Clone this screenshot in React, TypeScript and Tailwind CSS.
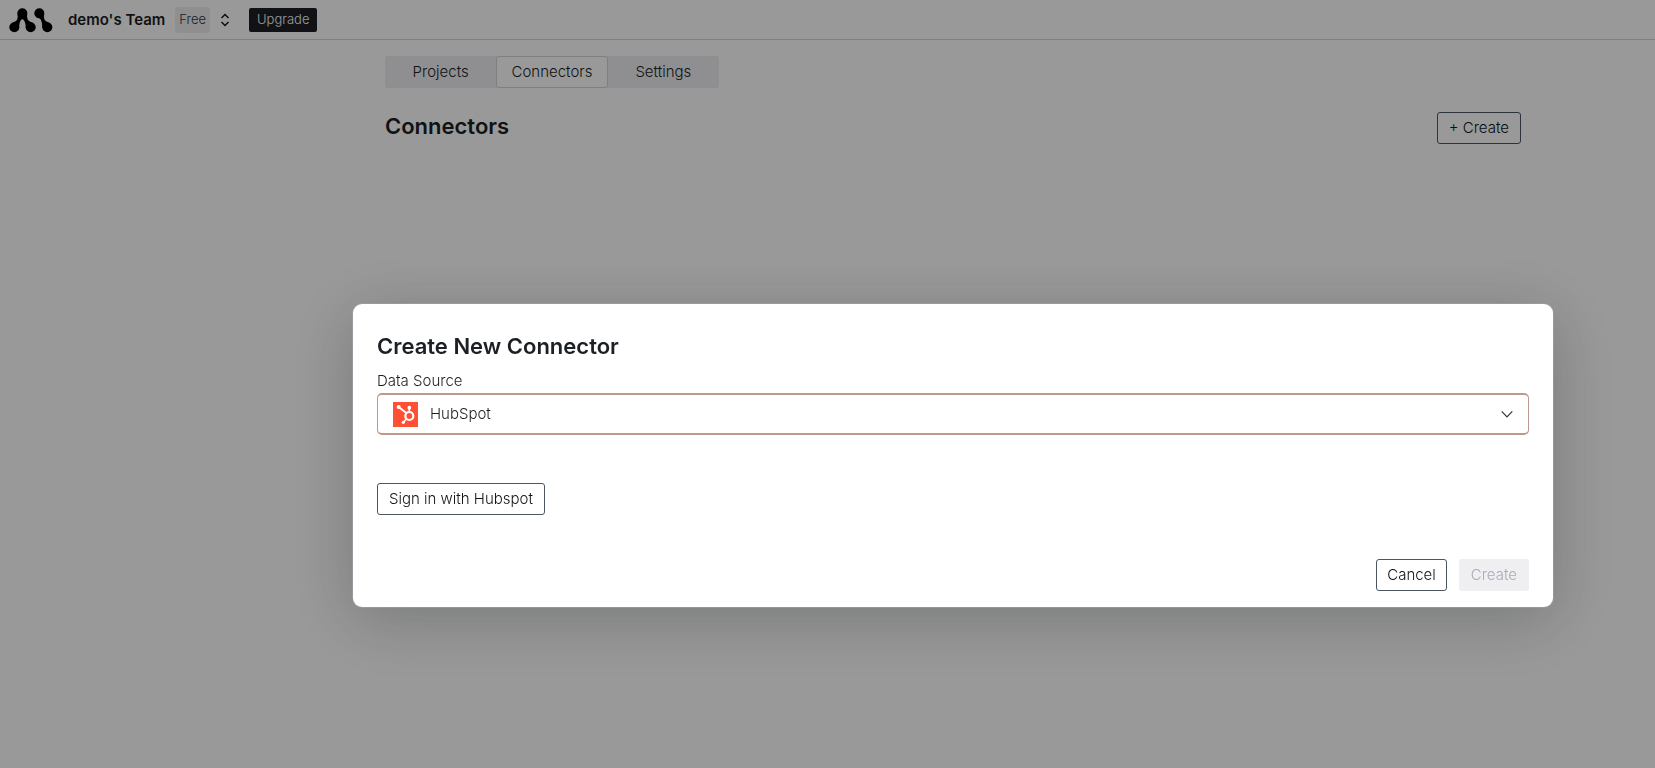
import { useState } from "react";

const buttonBase =
  "h-8 rounded-[3px] border text-[15px] leading-5 whitespace-nowrap";
const outlineButton = `${buttonBase} border-[#4b5563] px-[11px] text-[#111417]`;

function Logo() {
  return (
    <svg viewBox="26 23 132 75" className="h-[25px] w-11" aria-label="Home" role="img">
      <circle cx="66" cy="39" r="15" />
      <circle cx="42" cy="81" r="15" />
      <circle cx="91" cy="81" r="15" />
      <circle cx="117" cy="39" r="15" />
      <circle cx="141" cy="81" r="15" />
      <path d="M51.500 43Q56 60 38 66.500L56 82Q57 60 66 56Q75 60 77 82L95 66.500Q77 60 80.500 43Z" />
      <path d="M107 50Q110 53 117 54Q125 58 126 82L145 66.500Q127 60 131.500 43Z" />
    </svg>
  );
}

function HubSpotLogo() {
  return (
    <svg viewBox="0 0 75 75" className="pointer-events-none absolute left-4 size-[25px]" aria-hidden="true">
      <rect width="75" height="75" fill="#ff5035" />
      <g stroke="#fff" fill="none">
        <circle cx="49" cy="42" r="12" strokeWidth="6.5" />
        <path d="M49 30V18" strokeWidth="5" />
        <path d="M40 33L18 16" strokeWidth="5.5" />
        <path d="M40 51L32 60" strokeWidth="4.5" />
      </g>
      <g fill="#fff">
        <circle cx="49" cy="17" r="5.5" />
        <circle cx="17" cy="15" r="6" />
        <circle cx="31" cy="61" r="5" />
      </g>
    </svg>
  );
}

function Header() {
  return (
    <header className="flex h-10 items-center border-b border-[#d4d4d8] pt-px pl-[9px]">
      <a href="#home">
        <Logo />
      </a>
      <span className="ml-[15px] text-[15px] font-semibold text-[#1a1d21]">demo's Team</span>
      <span className="ml-[10px] flex h-[26px] items-center rounded bg-[#eeeef1] px-1 text-[13px] text-[#33363b]">
        Free
      </span>
      <button type="button" aria-label="Switch team" className="ml-[7px] flex size-4 items-center justify-center">
        <svg viewBox="0 0 16 16" className="size-4" fill="none" stroke="#18181b" strokeWidth="1.5">
          <path d="M4.500 6L8 2.500L11.500 6M4.500 10L8 13.500L11.500 10" />
        </svg>
      </button>
      <button type="button" className="ml-4 h-6 rounded-[2px] bg-[#1c1f23] px-2 text-[13px] text-white">
        Upgrade
      </button>
    </header>
  );
}

function Tabs() {
  const tab = "h-8 rounded-[3px] text-[15px] text-[#1c1f23]";
  return (
    <nav className="grid w-[334px] grid-cols-3 rounded-[3px] bg-[#eeeff3]">
      <button type="button" className={tab}>Projects</button>
      <button type="button" aria-current="page" className={`${tab} border border-[#d4d4d8] bg-white`}>
        Connectors
      </button>
      <button type="button" className={tab}>Settings</button>
    </nav>
  );
}

function ConnectorDialog() {
  const [source, setSource] = useState("HubSpot");
  return (
    <div className="fixed inset-0 flex items-start justify-center bg-black/40 pt-76 pl-[251px]">
      <div
        role="dialog"
        aria-modal="true"
        aria-labelledby="dialog-title"
        className="w-full max-w-[1200px] rounded-[9px] bg-white px-6 pt-6 pb-4 shadow-[0_0_0_1px_rgba(160,160,170,0.6),0_12px_64px_rgba(20,22,28,0.25)]"
      >
        <h2 id="dialog-title" className="text-[22px] leading-9 font-semibold text-[#1c1f23]">
          Create New Connector
        </h2>
        <label htmlFor="source" className="mt-[5px] block text-[15px] leading-6 text-[#1c1f23]">
          Data Source
        </label>
        <div className="relative flex items-center">
          <select
            id="source"
            value={source}
            onChange={(e) => setSource(e.target.value)}
            className="h-[42px] w-full appearance-none rounded-[5px] border-2 border-x border-[#bd988c] bg-white pl-13 text-[15px] text-[#1c1f23] outline-none"
          >
            <option>HubSpot</option>
          </select>
          <HubSpotLogo />
          <svg
            viewBox="0 0 12 8"
            className="pointer-events-none absolute right-4 h-2 w-3"
            fill="none"
            stroke="#33363b"
            strokeWidth="1.2"
            aria-hidden="true"
          >
            <path d="M.7 1.400L6 6.800L11.300 1.400" />
          </svg>
        </div>
        <button type="button" className={`${outlineButton} mt-12 block`}>
          Sign in with Hubspot
        </button>
        <div className="mt-11 flex justify-end gap-3">
          <button type="button" className={`${buttonBase} border-[#4b5563] px-[10px] text-[#111417]`}>
            Cancel
          </button>
          <button
            type="button"
            disabled
            className={`${buttonBase} border-transparent bg-[#efeff2] px-[11px] text-[#a9adbb]`}
          >
            Create
          </button>
        </div>
      </div>
    </div>
  );
}

export default function App() {
  return (
    <div className="min-h-screen bg-white font-['Inter',sans-serif] font-light">
      <Header />
      <main className="pl-[251px]">
        <div className="mx-auto max-w-[1200px] px-8 pt-4">
          <Tabs />
          <div className="mt-6 flex items-start justify-between">
            <h1 className="text-[22px] leading-7 font-semibold text-[#1c1f23]">Connectors</h1>
            <button type="button" className={outlineButton}>+ Create</button>
          </div>
        </div>
      </main>
      <ConnectorDialog />
    </div>
  );
}
